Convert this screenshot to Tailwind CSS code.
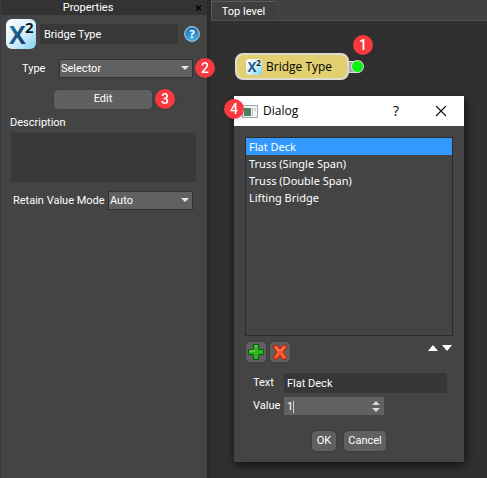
<!DOCTYPE html>
<html lang="en">
<head>
    <meta charset="utf-8">
    <title>Properties</title>
    <script src="https://cdn.jsdelivr.net/npm/@tailwindcss/browser@4"></script>
</head>
<body class="flex min-h-screen overflow-hidden bg-[#303030] font-['Roboto',sans-serif] text-[11px] leading-4 text-white">
    <svg class="absolute size-0">
        <defs>
            <linearGradient id="tile" x1="0" y1="0" x2="1" y2="1">
                <stop offset="0" stop-color="#ffffff"/>
                <stop offset=".55" stop-color="#d3effb"/>
                <stop offset="1" stop-color="#7fd0f2"/>
            </linearGradient>
            <linearGradient id="xfill" x1="0" y1="0" x2="1" y2="1">
                <stop offset="0" stop-color="#2d86b8"/>
                <stop offset="1" stop-color="#0e2c4c"/>
            </linearGradient>
            <radialGradient id="help" cx=".5" cy=".8" r=".8">
                <stop offset="0" stop-color="#4db4ec"/>
                <stop offset="1" stop-color="#1b68a8"/>
            </radialGradient>
            <symbol id="x2" viewBox="0 0 30 30">
                <rect width="30" height="30" rx="6" fill="url(#tile)"/>
                <text x="3" y="25" font-family="Open Sans, sans-serif" font-size="25" font-weight="700" fill="url(#xfill)">X</text>
                <text x="19" y="14" font-family="Open Sans, sans-serif" font-size="15" font-weight="700" fill="#10181f">2</text>
            </symbol>
        </defs>
    </svg>

    <!-- Properties panel -->
    <aside class="w-[207px] shrink-0 border-l border-[#3b3b48] bg-[#444444]">
        <header class="relative h-[15px] bg-[#333333] text-center leading-[15px]">
            <h2 class="pr-8">Properties</h2>
            <button aria-label="Close" class="absolute top-1 right-1">
                <svg class="size-2" viewBox="0 0 8 8"><path d="M1 1.5l5 5M6 1.5l-5 5" stroke="#050505" stroke-width="1.6"/></svg>
            </button>
        </header>
        <div class="flex items-center gap-1 pt-1 pl-[5px]">
            <svg class="size-[30px] shrink-0"><use href="#x2"/></svg>
            <input aria-label="Name" value="Bridge Type" class="h-5 w-[138px] bg-[#383838] px-1 outline-none">
            <button aria-label="Help" class="ml-0.5">
                <svg class="size-4" viewBox="0 0 16 16">
                    <circle cx="8" cy="8" r="7.3" fill="url(#help)" stroke="#9fc4dd" stroke-width="1.2"/>
                    <text x="8" y="12" text-anchor="middle" font-family="Open Sans, sans-serif" font-size="11" font-weight="700" fill="#fff">?</text>
                </svg>
            </button>
        </div>
        <div class="mt-2.5 flex items-center">
            <label for="type" class="w-[58px] pl-[21px]">Type</label>
            <div class="relative">
                <select id="type" class="h-[19px] w-[134px] appearance-none border border-[#333333] bg-[#616161] px-px leading-4 outline-none">
                    <option>Selector</option>
                </select>
                <svg class="pointer-events-none absolute top-[7px] right-1 h-1 w-2" viewBox="0 0 8 4"><path d="M0 0h8L4 4z" fill="#e6e6e6"/></svg>
                <svg class="absolute -top-px left-[136px] size-5 drop-shadow" viewBox="0 0 20 20"><circle cx="10" cy="10" r="10" fill="#f83a40"/><text x="10" y="15" text-anchor="middle" font-size="14" font-weight="500" fill="#fff">2</text></svg>
            </div>
        </div>
        <div class="mt-[11px] flex items-center pl-[53px]">
            <button class="h-[19px] w-[98px] rounded-sm bg-[#606060] shadow-[0_0_1px_#222]">Edit</button>
            <svg class="ml-[3px] size-5 drop-shadow" viewBox="0 0 20 20"><circle cx="10" cy="10" r="10" fill="#f83a40"/><text x="10" y="15" text-anchor="middle" font-size="14" font-weight="500" fill="#fff">3</text></svg>
        </div>
        <div class="mt-1.5 pr-2.5 pl-[9px]">
            <label for="description" class="block">Description</label>
            <textarea id="description" class="mt-px block h-[51px] w-full resize-none border border-[#404040] bg-[#393939] outline-none"></textarea>
        </div>
        <div class="mt-2 flex items-center">
            <label for="retain" class="w-[107px] pl-3 whitespace-nowrap">Retain Value Mode</label>
            <div class="relative">
                <select id="retain" class="h-[19px] w-[85px] appearance-none border border-[#333333] bg-[#616161] px-px leading-4 outline-none">
                    <option>Auto</option>
                </select>
                <svg class="pointer-events-none absolute top-[7px] right-1 h-1 w-2" viewBox="0 0 8 4"><path d="M0 0h8L4 4z" fill="#e6e6e6"/></svg>
            </div>
        </div>
    </aside>

    <!-- Graph view -->
    <main class="flex flex-1 flex-col border-l-4 border-[#2b2b2b]">
        <nav class="flex h-[21px] border-b border-[#505050] bg-[#414141]">
            <button class="mt-px w-16 border-t border-l border-[#5c5c5c] bg-[#3f3f3f] pt-0.5 whitespace-nowrap">Top level</button>
        </nav>
        <div class="relative flex-1">
            <!-- Node -->
            <div class="absolute top-8 left-6 flex items-center">
                <div class="z-10 flex h-[27px] w-[114px] items-center gap-1 rounded-lg border-2 border-[#dedbd4] bg-[#e2d070] pl-[9px] font-['Open_Sans',sans-serif] text-xs whitespace-nowrap text-black">
                    <svg class="size-4 shrink-0"><use href="#x2"/></svg>
                    Bridge Type
                </div>
                <div class="-ml-px flex h-3 w-[15px] items-center justify-end rounded-r-full border border-[#dedbd4] bg-[#aaa]">
                    <span class="-mr-px size-[11px] shrink-0 rounded-full bg-[#08f410] ring-1 ring-[#dedbd4]"></span>
                </div>
            </div>
            <svg class="absolute top-3.5 left-[142px] size-5 drop-shadow" viewBox="0 0 20 20"><circle cx="10" cy="10" r="10" fill="#f83a40"/><text x="10" y="15" text-anchor="middle" font-size="14" font-weight="500" fill="#fff">1</text></svg>

            <!-- Dialog window -->
            <section role="dialog" aria-labelledby="dialog-title" class="absolute top-[75px] left-[23px] w-[230px] bg-[#444444] pb-[11px] shadow-[1px_3px_9px_#111]">
                <header class="flex h-[30px] items-center bg-white pr-[17px] pl-2 font-['Open_Sans',sans-serif] text-black">
                    <svg class="h-[13px] w-4" viewBox="0 0 16 13">
                        <rect x=".5" y=".5" width="15" height="12" fill="#f4f4f4" stroke="#a2a7a5"/>
                        <rect x="2" y="3" width="7" height="8" fill="#4f8067"/>
                        <path d="M10.5 3v8M13 3v3" stroke="#b6bbb8"/>
                    </svg>
                    <h3 id="dialog-title" class="ml-[5px] flex-1 text-xs">Dialog</h3>
                    <button aria-label="Help" class="mr-9 text-sm">?</button>
                    <button aria-label="Close"><svg class="size-3" viewBox="0 0 12 12"><path d="M1 1l10 10M11 1L1 11" stroke="#111" stroke-width="1.1"/></svg></button>
                </header>
                <svg class="absolute top-[3px] -left-2.5 size-5 drop-shadow" viewBox="0 0 20 20"><circle cx="10" cy="10" r="10" fill="#f83a40"/><text x="10" y="15" text-anchor="middle" font-size="14" font-weight="500" fill="#fff">4</text></svg>
                <ul role="listbox" aria-label="Values" class="mx-[11px] mt-[11px] h-[199px] border border-[#2d2d2d] font-['Noto_Sans',sans-serif] leading-[17px]">
                    <li role="option" aria-selected="true" class="bg-[#3399ff] pl-[3px]">Flat Deck</li>
                    <li role="option" class="pl-[3px]">Truss (Single Span)</li>
                    <li role="option" class="pl-[3px]">Truss (Double Span)</li>
                    <li role="option" class="pl-[3px]">Lifting Bridge</li>
                </ul>
                <div class="mt-1.5 flex gap-1 pr-3 pl-3">
                    <button aria-label="Add" class="flex size-5 items-center justify-center rounded-sm bg-[#606060] shadow-[0_0_1px_#111]">
                        <svg class="size-4" viewBox="0 0 16 16"><path d="M5.5 .5h5v5h5v5h-5v5h-5v-5h-5v-5h5z" fill="#2eb51f" stroke="#0c5a08"/><path d="M7 2h2M2 7h5" stroke="#8be06f"/></svg>
                    </button>
                    <button aria-label="Remove" class="flex size-5 items-center justify-center rounded-sm bg-[#606060] shadow-[0_0_1px_#111]">
                        <svg class="size-4" viewBox="0 0 16 16"><path d="M1.5 2l3-1.3L8 5l3.2-4.3 3.3 1v2L11 8l3.7 5-1.2 2.3h-3L8 11.3l-3.3 4-3-.8v-2L5 8 1.5 4z" fill="#ff5a2c" stroke="#a81d0c"/><path d="M4 3l3 4M12 3L9 6" stroke="#ff9a72"/></svg>
                    </button>
                    <div class="ml-auto flex items-start gap-1 pt-[3px]">
                        <button aria-label="Move up"><svg class="h-1.5 w-2.5" viewBox="0 0 10 6"><path d="M0 6l5-6 5 6z" fill="#fff"/></svg></button>
                        <button aria-label="Move down"><svg class="h-1.5 w-2.5" viewBox="0 0 10 6"><path d="M0 0h10L5 6z" fill="#fff"/></svg></button>
                    </div>
                </div>
                <div class="mt-[11px] flex items-center pr-[17px] pl-[19px]">
                    <label for="text" class="w-[31px]">Text</label>
                    <input id="text" value="Flat Deck" class="h-5 min-w-0 flex-1 bg-[#373737] px-[3px] outline-none">
                </div>
                <div class="mt-1 flex items-center pl-[19px]">
                    <label for="value" class="w-[31px]">Value</label>
                    <div class="relative">
                        <input id="value" value="1" class="h-[18px] w-[100px] bg-[#616161] px-[3px] outline-none">
                        <span class="absolute top-1 left-[9px] h-3 w-px bg-[#d0d0d0]"></span>
                        <svg class="absolute top-1 right-1 h-[11px] w-2" viewBox="0 0 8 11"><path d="M0 4l4-4 4 4zM0 7h8l-4 4z" fill="#d8d8d8"/></svg>
                    </div>
                </div>
                <div class="mt-4 flex gap-2 pl-[78px]">
                    <button class="h-5 w-6 rounded-sm bg-[#606060] shadow-[0_0_1px_#111]">OK</button>
                    <button class="h-5 w-[42px] rounded-sm bg-[#606060] shadow-[0_0_1px_#111]">Cancel</button>
                </div>
            </section>
        </div>
    </main>
</body>
</html>
